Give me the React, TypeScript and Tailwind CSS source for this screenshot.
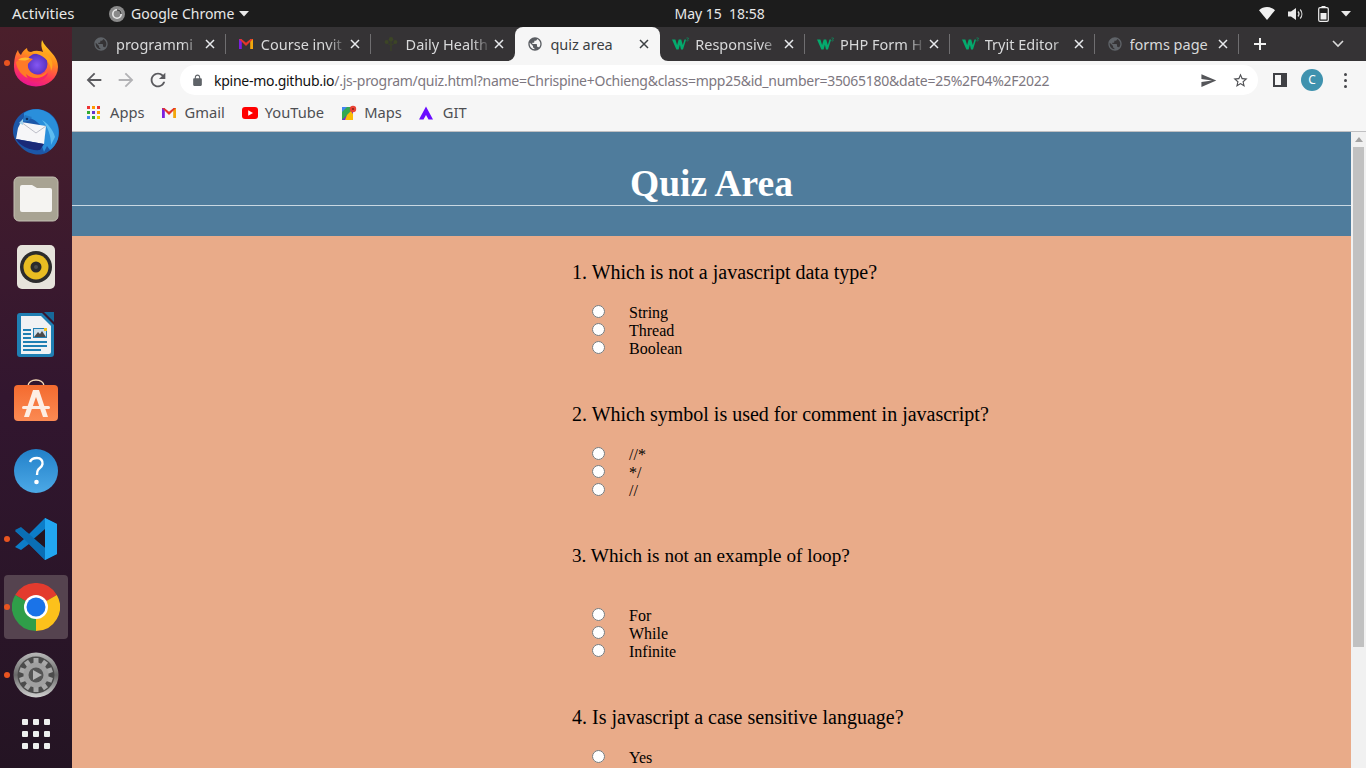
import React from "react";

const UI = "font-['Noto_Sans','Open_Sans',sans-serif]";

const P = {
  back: "M20 11H7.83l5.59-5.59L12 4l-8 8 8 8 1.41-1.41L7.83 13H20v-2z",
  fwd: "M12 4l-1.41 1.41L16.17 11H4v2h12.17l-5.58 5.59L12 20l8-8z",
  reload: "M17.65 6.35C16.2 4.9 14.21 4 12 4c-4.42 0-7.99 3.58-7.99 8s3.57 8 7.99 8c3.73 0 6.84-2.55 7.73-6h-2.08c-.82 2.33-3.04 4-5.65 4-3.31 0-6-2.69-6-6s2.69-6 6-6c1.66 0 3.14.69 4.22 1.78L13 11h7V4l-2.35 2.35z",
  send: "M2.01 21L23 12 2.01 3 2 10l15 2-15 2z",
  star: "M22 9.24l-7.19-.62L12 2 9.19 8.63 2 9.24l5.46 4.73L5.82 21 12 17.27 18.18 21l-1.63-7.03L22 9.24zM12 15.4l-3.76 2.27 1-4.28-3.32-2.88 4.38-.38L12 6.1l1.71 4.04 4.38.38-3.32 2.88 1 4.28L12 15.4z",
  lock: "M18 8h-1V6c0-2.76-2.24-5-5-5S7 3.24 7 6v2H6c-1.1 0-2 .9-2 2v10c0 1.1.9 2 2 2h12c1.1 0 2-.9 2-2V10c0-1.1-.9-2-2-2zM9 6c0-1.66 1.34-3 3-3s3 1.34 3 3v2H9V6z",
  globe: "M12 2C6.48 2 2 6.48 2 12s4.48 10 10 10 10-4.48 10-10S17.52 2 12 2zm-1 17.93c-3.95-.49-7-3.85-7-7.93 0-.62.08-1.21.21-1.79L9 15v1c0 1.1.9 2 2 2v1.93zm6.9-2.54c-.26-.81-1-1.39-1.9-1.39h-1v-3c0-.55-.45-1-1-1H8v-2h2c.55 0 1-.45 1-1V7h2c1.1 0 2-.9 2-2v-.41c2.93 1.19 5 4.06 5 7.41 0 2.08-.8 3.97-2.1 5.39z",
};

function Mi({ d, size, color }: { d: string; size: number; color: string }) {
  return (
    <svg width={size} height={size} viewBox="0 0 24 24" fill={color} className="shrink-0">
      <path d={d} />
    </svg>
  );
}

function GmailIcon() {
  return (
    <svg width="16" height="16" viewBox="0 0 16 16" className="shrink-0">
      <path d="M1 3 L3.800 3 L3.800 13 L1 13Z" fill="#7c1fe0" />
      <path d="M12.200 3 L15 3 L15 13 L12.200 13Z" fill="#f2a60c" />
      <path d="M1 3 L3.400 3 L8 6.800 L8 10 Z" fill="#e5352b" />
      <path d="M15 3 L12.600 3 L8 6.800 L8 10 Z" fill="#e5352b" />
    </svg>
  );
}

function W3Icon() {
  return (
    <svg width="17" height="14" viewBox="0 0 17 14" className="shrink-0">
      <path d="M0 2.500h3.400l1.700 5.600 1.600-5.600h2.500l1.600 5.600 1.700-5.600h1.600L11 12.500H9L7.900 7.800 6.600 12.500H4.400z" fill="#04aa6d" />
      <path d="M14.400 1h2v.6l-.8.8c.6.1.8.5.7.9-.1.6-1 .8-1.900.4" fill="none" stroke="#04aa6d" strokeWidth=".6" />
    </svg>
  );
}

function TreeIcon() {
  return (
    <svg width="16" height="16" viewBox="0 0 16 16" className="shrink-0">
      <path d="M7.300 15V9.500L4 7.500l.6-.6 2.700 1.400V5h1.400v3.300l2.700-1.600.6.7-3.300 2.200V15z" fill="#3a4028" />
      <circle cx="8" cy="3.200" r="2.200" fill="#3c4526" />
      <circle cx="3.600" cy="6" r="2" fill="#3c4526" />
      <circle cx="12.400" cy="6" r="2" fill="#3c4526" />
    </svg>
  );
}

type TabData = { label: string; icon: React.ReactNode; active?: boolean; sep?: boolean };

const globeGrey = <Mi d={P.globe} size={16} color="#5f6368" />;

const tabs: TabData[] = [
  { label: "programmi", icon: globeGrey, sep: true },
  { label: "Course invit", icon: <GmailIcon />, sep: true },
  { label: "Daily Health", icon: <TreeIcon /> },
  { label: "quiz area", icon: <Mi d={P.globe} size={16} color="#5a5d62" />, active: true },
  { label: "Responsive", icon: <W3Icon />, sep: true },
  { label: "PHP Form H", icon: <W3Icon />, sep: true },
  { label: "Tryit Editor", icon: <W3Icon />, sep: true },
  { label: "forms page", icon: globeGrey, sep: true },
];

function Tab({ t }: { t: TabData }) {
  return (
    <div
      className={
        "relative flex h-full w-[144.8px] shrink-0 items-center pl-[12px] pr-[11px] " +
        (t.active ? "rounded-t-[8px] bg-[#f6f6f6] text-[#3c4043]" : "text-[#d8d9da]")
      }
    >
      <span className="flex w-[23px] shrink-0 items-center">{t.icon}</span>
      <span
        className={
          "mb-[1px] min-w-0 flex-1 overflow-hidden whitespace-nowrap text-[14.5px] leading-[20px] " +
          (t.label === "forms page" || t.active ? "" : "[mask-image:linear-gradient(to_right,#000_78%,transparent_100%)]")
        }
      >
        {t.label}
      </span>
      <svg width="10" height="10" viewBox="0 0 10 10" className="ml-[3px] shrink-0">
        <path d="M1 1l8 8M9 1l-8 8" stroke={t.active ? "#3c4043" : "#e8eaed"} strokeWidth="1.500" />
      </svg>
      {t.sep && <span className="absolute right-0 top-[7px] h-[20px] w-px bg-[#6f6e70]" />}
      {t.active && (
        <>
          <svg width="8" height="8" viewBox="0 0 8 8" className="absolute bottom-0 left-[-8px]">
            <path d="M8 0V8H0A8 8 0 0 0 8 0Z" fill="#f6f6f6" />
          </svg>
          <svg width="8" height="8" viewBox="0 0 8 8" className="absolute bottom-0 right-[-8px]">
            <path d="M0 0V8H8A8 8 0 0 1 0 0Z" fill="#f6f6f6" />
          </svg>
        </>
      )}
    </div>
  );
}

function TopBar() {
  return (
    <div className={`flex h-[27px] shrink-0 items-center bg-[#1c1c1c] text-[14px] text-[#e8e8e8] ${UI}`}>
      <span className="ml-[12px] w-[97px] text-[15px]">Activities</span>
      <svg width="16" height="16" viewBox="0 0 16 16">
        <circle cx="8" cy="8" r="8" fill="#8a8a8a" />
        <circle cx="8" cy="8" r="4.200" fill="none" stroke="#e8e8e8" strokeWidth="1.600" />
        <path d="M8 4 A4 4 0 0 1 12 8" stroke="#444" strokeWidth="1.600" fill="none" />
      </svg>
      <span className="ml-[6px]">Google Chrome</span>
      <svg width="10" height="6" viewBox="0 0 10 6" className="ml-[5px]">
        <path d="M0 0h10L5 5.500z" fill="#e8e8e8" />
      </svg>
      <div className="flex flex-1 justify-center pr-[69px]">
        <span>May 15&nbsp;&nbsp;18:58</span>
      </div>
      <div className="flex items-center pr-[15px]">
        <svg width="16" height="13" viewBox="0 0 16 13">
          <path d="M0 3.200C4.500-1 11.500-1 16 3.200L8 13z" fill="#f0f0f0" />
        </svg>
        <svg width="16" height="14" viewBox="0 0 16 14" className="ml-[13px]">
          <path d="M0 4.500h3L8 1v12L3 9.500H0z" fill="#eaeaea" />
          <path d="M10 4.500c1.200 1.400 1.200 3.600 0 5M12.200 2.500c2.200 2.600 2.200 6.400 0 9" fill="none" stroke="#d8d8d8" strokeWidth="1.200" />
        </svg>
        <svg width="11" height="16" viewBox="0 0 11 16" className="ml-[14px]">
          <rect x="3.500" y="0" width="4" height="2" fill="#eee" />
          <rect x=".7" y="1.700" width="9.600" height="13.600" rx="1.400" fill="none" stroke="#eee" strokeWidth="1.200" />
          <rect x="2.500" y="7" width="6" height="6.500" fill="#eee" />
        </svg>
        <svg width="10" height="6" viewBox="0 0 10 6" className="ml-[12px]">
          <path d="M0 0h10L5 5.500z" fill="#e8e8e8" />
        </svg>
      </div>
    </div>
  );
}

function TabStrip() {
  return (
    <div className={`flex h-[34px] shrink-0 items-end bg-[#353335] pl-[9px] ${UI}`}>
      <div className="flex h-[34px] items-stretch">
        {tabs.map((t) => (
          <Tab key={t.label} t={t} />
        ))}
      </div>
      <div className="flex h-full flex-1 items-center">
        <svg width="14" height="14" viewBox="0 0 14 14" className="ml-[14px]">
          <path d="M7 1v12M1 7h12" stroke="#f1f1f1" strokeWidth="2" />
        </svg>
        <svg width="12" height="8" viewBox="0 0 12 8" className="ml-auto mr-[22px]">
          <path d="M1 1l5 5 5-5" fill="none" stroke="#dadada" strokeWidth="1.600" />
        </svg>
      </div>
    </div>
  );
}

function Toolbar() {
  return (
    <div className={`flex h-[35px] shrink-0 items-start bg-[#f6f6f6] pl-[11px] pt-[4px] ${UI}`}>
      <div className="flex h-[30px] items-center">
        <Mi d={P.back} size={22} color="#5a5a5e" />
        <span className="ml-[10px]">
          <Mi d={P.fwd} size={22} color="#b2b2b5" />
        </span>
        <span className="ml-[10px]">
          <Mi d={P.reload} size={22} color="#5a5a5e" />
        </span>
        <div className="ml-[11px] flex h-[30px] w-[1078px] items-center rounded-full bg-white pl-[11px]">
          <Mi d={P.lock} size={13} color="#5f6368" />
          <span className="ml-[10px] whitespace-nowrap text-[14px] tracking-[-0.265px] text-[#7d7780]">
            <span className="text-[#111]">kpine-mo.github.io</span>/.js-program/quiz.html?name=Chrispine+Ochieng&amp;class=mpp25&amp;id_number=35065180&amp;date=25%2F04%2F2022
          </span>
          <span className="ml-auto flex items-center">
            <span className="mr-[1px]"><Mi d={P.send} size={17} color="#55565a" /></span>
            <span className="ml-[14px] mr-[9px]">
              <Mi d={P.star} size={17} color="#505155" />
            </span>
          </span>
        </div>
        <svg width="14" height="14" viewBox="0 0 14 14" className="ml-[15px]">
          <path d="M0 0h14v14H0zM2 2v10h6V2z" fill="#3f4044" fillRule="evenodd" />
        </svg>
        <span className="ml-[14px] flex h-[22px] w-[22px] items-center justify-center rounded-full bg-[#3f92ae] text-[12px] text-white">
          C
        </span>
        <span className="ml-[21px] flex flex-col gap-[3px]">
          <i className="h-[3px] w-[3px] rounded-full bg-[#46474b]" />
          <i className="h-[3px] w-[3px] rounded-full bg-[#46474b]" />
          <i className="h-[3px] w-[3px] rounded-full bg-[#46474b]" />
        </span>
      </div>
    </div>
  );
}

function Bookmarks() {
  const dots = ["#e33", "#f90", "#e33", "#3a3", "#63c", "#f90", "#4285f4", "#3a3", "#ec0"];
  return (
    <div className={`flex h-[36px] shrink-0 items-center border-b border-[#c0c0c2] bg-[#f6f6f6] pb-[2px] pl-[15px] text-[14.7px] text-[#4e4f53] ${UI}`}>
      <span className="grid grid-cols-3 gap-[2px]">
        {dots.map((c, i) => (
          <i key={i} className="h-[3px] w-[3px]" style={{ background: c }} />
        ))}
      </span>
      <span className="ml-[10px]">Apps</span>
      <span className="ml-[16px]"><GmailIcon /></span>
      <span className="ml-[8px]">Gmail</span>
      <svg width="16" height="12" viewBox="0 0 16 12" className="ml-[17px]">
        <rect width="16" height="12" rx="3" fill="#f00" />
        <path d="M6.200 3.200v5.600L11 6z" fill="#fff" />
      </svg>
      <span className="ml-[7px]">YouTube</span>
      <svg width="16" height="16" viewBox="0 0 16 16" className="ml-[17px]">
        <path d="M1 2h11v13H1z" fill="#34a853" />
        <path d="M1 15 L12 5 V15z" fill="#7c1fe0" />
        <path d="M1 2h5L1 7z" fill="#4285f4" />
        <path d="M6 10l4-4 2 3v6H4z" fill="#fbbc04" />
        <circle cx="12" cy="4" r="3.200" fill="#ea4335" />
        <circle cx="12" cy="4" r="1.100" fill="#8f2318" />
      </svg>
      <span className="ml-[7px]">Maps</span>
      <svg width="14" height="14" viewBox="0 0 14 14" className="ml-[17px]">
        <path d="M7 0.500 L14 13.500 H9.500 L7 9 L4.500 13.500 H0 Z" fill="#6a0dff" />
      </svg>
      <span className="ml-[10px]">GIT</span>
    </div>
  );
}

function Firefox() {
  return (
    <svg width="46" height="48" viewBox="0 0 46 48">
      <defs>
        <linearGradient id="ff1" x1="0.75" y1="0" x2="0.4" y2="1">
          <stop offset="0" stopColor="#ffd31f" />
          <stop offset=".4" stopColor="#ff8a1f" />
          <stop offset=".72" stopColor="#ff3a55" />
          <stop offset="1" stopColor="#e9158f" />
        </linearGradient>
        <radialGradient id="ff2" cx=".5" cy=".55" r=".6">
          <stop offset="0" stopColor="#8457f2" />
          <stop offset="1" stopColor="#4f2ab8" />
        </radialGradient>
      </defs>
      <path d="M5 11C5.500 14 7 15 8 16C9 13 11 11 14 9C14 12 16 13 18 13L30 13C28 8 28 5 29 1C31 6 35 9 38 13C43 18 45 23 45 28A22 19.500 0 0 1 1 28C1 22 2 15 5 11Z" fill="url(#ff1)" />
      <circle cx="24" cy="25" r="10.500" fill="url(#ff2)" />
      <path d="M18 13C25 10 34 13 38 20C40 24 40 28 38 32C38 24 32 17 24 15Z" fill="#ffa31f" />
      <path d="M3 23C8 19 14 18 20 20C18 22 16 23 15 25C14 30 18 35 25 36C30 36 33 34 35 30C33 38 26 42 18 40C9 38 4 31 3 23Z" fill="#ff7a26" />
      <path d="M5 21C9 18 13 18 17 19.500C15 21 13 21.500 11 21.500Z" fill="#ffbd2e" />
      <path d="M13 35C18 40 28 41 35 34C33 41 25 44 18 42C15 41 14 38 13 35Z" fill="#f5246a" />
    </svg>
  );
}

function Thunderbird() {
  return (
    <svg width="48" height="50" viewBox="0 0 48 50">
      <path d="M24 3C37 3 47 13 47 25C47 36 40 46 31 48C24 50 14 47 8 40C3 35 1 30 1 25C1 13 11 3 24 3Z" fill="#1c57a8" />
      <path d="M12 7C20 1 33 2 41 11C46 17 48 25 46 33C44 38 42 41 38 44L35 40L32 46L30 40C32 33 32 25 28 19C24 14 18 11 12 11Z" fill="#2a8fdb" />
      <path d="M30 14C35 17 41 23 43 31L39 39C39 30 36 21 30 14Z" fill="#5dbcf0" />
      <path d="M9 16L34 20L32 38L4 33L6 22Z" fill="#f6f6f8" />
      <path d="M9 16L24 27L34 20" fill="none" stroke="#b5b7c2" strokeWidth="0.900" />
      <path d="M4 33L32 38L28 44C18 45 8 40 4 33Z" fill="#1a2a78" />
      <path d="M9 16L13 9L20 11L16 15Z" fill="#2377c4" />
      <circle cx="15" cy="13" r="1.300" fill="#10305e" />
      <path d="M7 17L11 13L11 19Z" fill="#9fd0ea" />
    </svg>
  );
}

function Files() {
  return (
    <svg width="46" height="46" viewBox="0 0 46 46">
      <rect x="1" y="1" width="44" height="44" rx="5" fill="#a8a393" stroke="#c3bfb2" strokeWidth="1" />
      <path d="M7 11a2 2 0 0 1 2-2h10l5 3h13a2 2 0 0 1 2 2v20a2 2 0 0 1-2 2H9a2 2 0 0 1-2-2z" fill="#f5f4f2" />
    </svg>
  );
}

function Rhythmbox() {
  return (
    <svg width="38" height="46" viewBox="0 0 38 46">
      <rect x="0" y="1" width="38" height="44" rx="5" fill="#e6e3db" />
      <circle cx="19" cy="23" r="16" fill="#2c2c2c" />
      <circle cx="19" cy="23" r="12.500" fill="#e9bd22" />
      <circle cx="19" cy="23" r="5.500" fill="#2b2b2b" />
      <circle cx="19" cy="23" r="2" fill="#4c4c4c" />
    </svg>
  );
}

function Writer() {
  return (
    <svg width="38" height="46" viewBox="0 0 38 46">
      <path d="M3 1h22l12 12v29a3 3 0 0 1-3 3H3a3 3 0 0 1-3-3V4a3 3 0 0 1 3-3z" fill="#1f7fb3" />
      <path d="M4 4h20l10 10v26a2 2 0 0 1-2 2H4z" fill="#f0f2f4" />
      <path d="M27 0h10v10z" fill="#17699a" />
      <path d="M6 17h8v2H6zm0 4h8v2H6zm0 4h8v2H6zm0 4h24v2H6zm0 4h24v2H6zm0 4h18v2H6z" fill="#1f7fb3" />
      <rect x="16" y="16" width="14" height="10" fill="#1f7fb3" />
      <rect x="17" y="17" width="12" height="8" fill="#cfe0ea" />
      <path d="M17 25l4-5 2 2 2-3 4 6z" fill="#4a4a4a" />
      <rect x="27" y="16" width="3" height="3" fill="#f0c020" />
    </svg>
  );
}

function Store() {
  return (
    <svg width="46" height="48" viewBox="0 0 46 48">
      <defs>
        <linearGradient id="st" x1="0" y1="0" x2="0" y2="1">
          <stop offset="0" stopColor="#f46b2f" />
          <stop offset="1" stopColor="#fb8a53" />
        </linearGradient>
      </defs>
      <path d="M15 7c0-8 16-8 16 0" fill="none" stroke="#f6d9b6" strokeWidth="1.500" />
      <rect x="1" y="6" width="44" height="36" rx="4" fill="url(#st)" />
      <path d="M20 11h6l9 27h-5l-7-20-7 20h-5z" fill="#fdeee4" />
      <rect x="9" y="27" width="28" height="3" rx="1.500" fill="#fdeee4" />
    </svg>
  );
}

function Help() {
  return (
    <svg width="44" height="44" viewBox="0 0 44 44">
      <defs>
        <linearGradient id="hp" x1="0" y1="0" x2="0" y2="1">
          <stop offset="0" stopColor="#2280c9" />
          <stop offset="1" stopColor="#4ca9e6" />
        </linearGradient>
      </defs>
      <circle cx="22" cy="22" r="22" fill="url(#hp)" />
      <path d="M16 13c1-3 4-4 7-4 4 0 6 3 5.500 6-.5 3-3 4-4.500 6-.8 1-1 2-1 5" fill="none" stroke="#fff" strokeWidth="2.400" />
      <circle cx="22.500" cy="33" r="2.300" fill="#fff" />
    </svg>
  );
}

function VSCode() {
  return (
    <svg width="44" height="44" viewBox="0 0 44 44">
      <path d="M31 1l12 6v30l-12 6-16-16-8 6-6-3 9-8-9-8 6-3 8 6z" fill="#0c7dc8" />
      <path d="M31 1l12 6v30l-12 6z" fill="#22a6f0" />
      <path d="M31 12L19.500 22 31 31z" fill="#241520" />
      <path d="M1 13l6-3 24 21v12z" fill="#0a6fb5" />
    </svg>
  );
}

function Chrome() {
  return (
    <svg width="48" height="48" viewBox="0 0 48 48">
      <path d="M24 24 L3.200 12 A24 24 0 0 1 44.800 12 Z" fill="#e33b2e" />
      <path d="M24 24 L44.800 12 A24 24 0 0 1 24 48 Z" fill="#fcc11b" />
      <path d="M24 24 L24 48 A24 24 0 0 1 3.200 12 Z" fill="#2f9e49" />
      <circle cx="24" cy="24" r="12" fill="#fff" />
      <circle cx="24" cy="24" r="9.500" fill="#1a73e8" />
    </svg>
  );
}

function Settings() {
  const teeth = Array.from({ length: 10 }, (_, i) => i * 36);
  return (
    <svg width="46" height="46" viewBox="0 0 46 46">
      <defs>
        <linearGradient id="sg" x1="0" y1="0" x2="0" y2="1">
          <stop offset="0" stopColor="#b9b9b9" />
          <stop offset=".5" stopColor="#6a6a6a" />
          <stop offset="1" stopColor="#d0d0d0" />
        </linearGradient>
      </defs>
      <circle cx="23" cy="23" r="22.500" fill="url(#sg)" />
      <circle cx="23" cy="23" r="18.500" fill="#4b4b4b" />
      {teeth.map((a) => (
        <rect key={a} x="20.500" y="6" width="5" height="6" fill="#a8a8a8" transform={`rotate(${a} 23 23)`} />
      ))}
      <circle cx="23" cy="23" r="12.500" fill="#a0a0a0" />
      <circle cx="23" cy="23" r="7.500" fill="#555" />
      <path d="M20 18l9 5-9 5z" fill="#b5b5b5" />
    </svg>
  );
}

function DockItem({ children, running, active }: { children: React.ReactNode; running?: boolean; active?: boolean }) {
  return (
    <div className="relative flex h-[68px] w-full items-center justify-center">
      {active && <span className="absolute left-[4px] top-[2px] h-[64px] w-[64px] rounded-[4px] bg-[#55434f]" />}
      {running && <span className="absolute left-[4px] top-[31px] h-[6px] w-[6px] rounded-full bg-[#e95420]" />}
      <span className="relative flex items-center justify-center">{children}</span>
    </div>
  );
}

function Dock() {
  return (
    <div className="flex w-[72px] shrink-0 flex-col bg-gradient-to-b from-[#4b1f2b] via-[#32162f] to-[#241423] pt-[2px]">
      <DockItem running><Firefox /></DockItem>
      <DockItem><Thunderbird /></DockItem>
      <DockItem><Files /></DockItem>
      <DockItem><Rhythmbox /></DockItem>
      <DockItem><Writer /></DockItem>
      <DockItem><Store /></DockItem>
      <DockItem><Help /></DockItem>
      <DockItem running><VSCode /></DockItem>
      <DockItem running active><Chrome /></DockItem>
      <DockItem running><Settings /></DockItem>
      <div className="grid w-full grid-cols-3 justify-items-center gap-y-[6px] px-[19px] pt-[10px]">
        {Array.from({ length: 9 }, (_, i) => (
          <i key={i} className="h-[6px] w-[6px] rounded-[1px] bg-[#efefef]" />
        ))}
      </div>
    </div>
  );
}

function Question({ title, options, titleClass, bottomClass }: { title: string; options: string[]; titleClass: string; bottomClass: string }) {
  return (
    <div className={bottomClass}>
      <div className={`text-black ${titleClass}`}>{title}</div>
      {options.map((o) => (
        <div key={o} className="flex h-[18px] text-[16px] leading-[18px] text-black">
          <input type="radio" name={title} className="m-0 ml-[20px] mt-px h-[13px] w-[13px] shrink-0" />
          <span className="ml-[24px]">{o}</span>
        </div>
      ))}
    </div>
  );
}

function Page() {
  return (
    <div className="flex min-h-0 flex-1">
      <div className="min-w-0 flex-1 overflow-hidden bg-[#e9ab89] font-['Liberation_Serif',serif]">
        <div className="h-[104px] bg-[#4f7c9c] pt-[29px]">
          <h1 className="text-center text-[37.5px] font-bold leading-[46px] text-white">Quiz Area</h1>
          <div className="mt-[-2px] h-px bg-[#c9d8e2]" />
        </div>
        <div className="ml-[500px] pt-[25px]">
          <Question title="1. Which is not a javascript data type?" options={["String", "Thread", "Boolean"]} titleClass="mb-[20px] text-[20px] leading-[23px]" bottomClass="mb-[45px]" />
          <Question title="2. Which symbol is used for comment in javascript?" options={["//*", "*/", "//"]} titleClass="mb-[20px] text-[20px] leading-[23px]" bottomClass="mb-[45px]" />
          <Question title="3. Which is not an example of loop?" options={["For", "While", "Infinite"]} titleClass="mb-[40px] text-[19.2px] leading-[22px]" bottomClass="mb-[45px]" />
          <Question title="4. Is javascript a case sensitive language?" options={["Yes"]} titleClass="mb-[20px] text-[20px] leading-[23px]" bottomClass="" />
        </div>
      </div>
      <div className="flex w-[15px] shrink-0 flex-col bg-[#f1f1f1]">
        <div className="flex h-[15px] items-center justify-center">
          <svg width="8" height="5" viewBox="0 0 8 5">
            <path d="M0 5L4 0l4 5z" fill="#a3a3a3" />
          </svg>
        </div>
        <div className="mx-[2px] h-[500px] bg-[#c1c1c1]" />
      </div>
    </div>
  );
}

export default function App() {
  return (
    <div className="flex h-screen w-screen flex-col overflow-hidden">
      <TopBar />
      <div className="flex min-h-0 flex-1">
        <Dock />
        <div className="flex min-w-0 flex-1 flex-col">
          <TabStrip />
          <Toolbar />
          <Bookmarks />
          <Page />
        </div>
      </div>
    </div>
  );
}
